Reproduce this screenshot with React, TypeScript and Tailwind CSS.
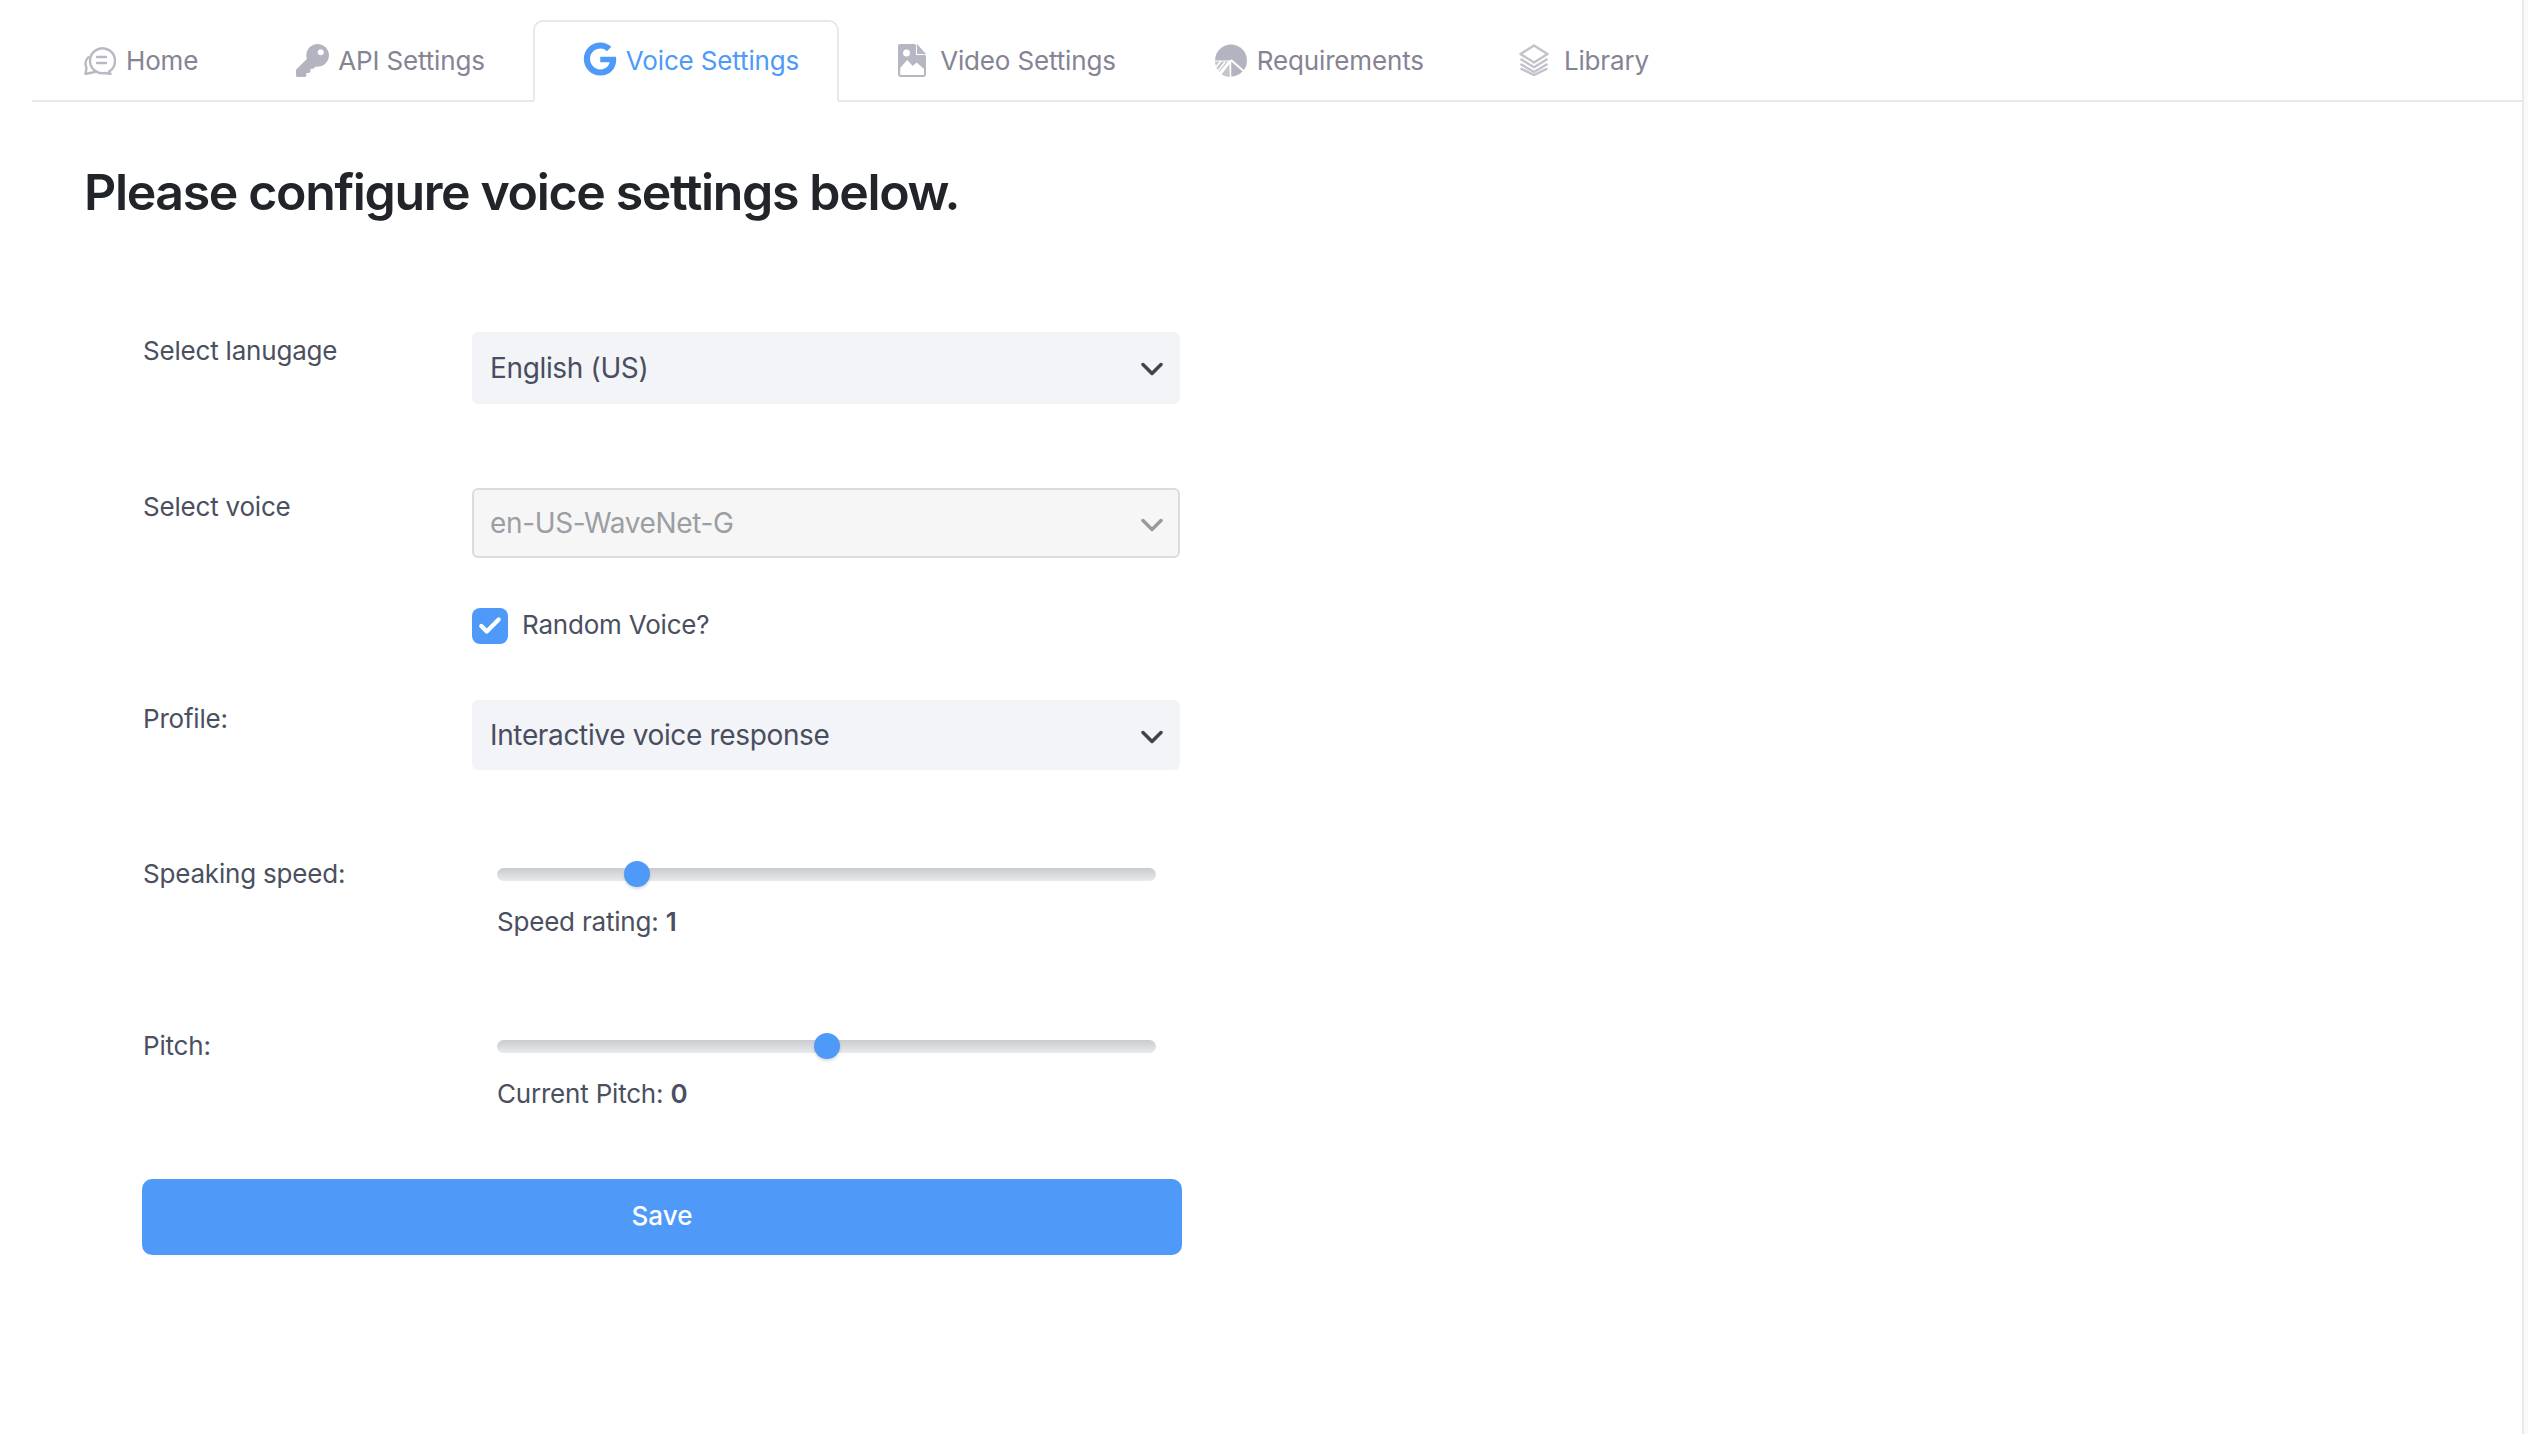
import { useState } from 'react';
import { FaGoogle, FaKey } from 'react-icons/fa';
import { Check } from 'lucide-react';

const HomeIcon = () => (
  <svg viewBox="0 0 32 30" className="h-[30px] w-[32px]" fill="none" stroke="#b9b9c5" strokeWidth="2.4" strokeLinejoin="round" strokeLinecap="round">
    <path d="M6 16a12.5 12.5 0 1 1 19 10.5l1.5 2.5-5.5-1a12.5 12.5 0 0 1-15-12z" />
    <path d="M4.5 12a10 10 0 0 0-2 11l-1 6 7-1.500 3-1" />
    <path d="M13 12h9M13 18h9" />
  </svg>
);

const VideoIcon = () => (
  <svg viewBox="0 0 28 33" className="h-[33px] w-[28px]">
    <path d="M2 0h15l11 12v18a3 3 0 0 1-3 3H3a3 3 0 0 1-3-3V2a2 2 0 0 1 2-2z" fill="#b7b7c3" />
    <path d="M2.200 30V24l7-8 5.500 6 4-3.500 7.300 6.500V30a1 1 0 0 1-1 1H3.200a1 1 0 0 1-1-1z" fill="#fff" />
    <circle cx="8.500" cy="9" r="3.500" fill="#fff" />
    <path d="M18 1.500l8.500 9.500H18z" fill="#fff" />
    <path d="M19 0l9 10h-9z" fill="#b7b7c3" />
  </svg>
);

const RequirementsIcon = () => (
  <svg viewBox="0 0 32 33" className="h-[33px] w-[32px]">
    <circle cx="16" cy="16.500" r="16" fill="#b4b4c0" />
    <path d="M0 16.500h15.500L14 33H0z" fill="#fff" />
    <path d="M0 17.500h13L4.500 28A16 16 0 0 1 0 17.500z" fill="#c5c5cf" />
    <path d="M14.500 20v13a16 16 0 0 1-8-2.500z" fill="#c5c5cf" />
    <path d="M16 16l16 14" stroke="#fff" strokeWidth="2" />
    <path d="M15.500 16v17" stroke="#fff" strokeWidth="1.500" />
    <path d="M1 23l5-6M3 27l7-9" stroke="#fff" strokeWidth="1.500" />
  </svg>
);

const LibraryIcon = () => (
  <svg viewBox="0 0 32 32" className="h-[32px] w-[32px]" fill="none" stroke="#c2c2cd" strokeWidth="2.400" strokeLinejoin="round">
    <path d="M16 1.500 29.500 10 16 18.500 2.500 10z" />
    <path d="M2.500 15 16 23.200 29.500 15" />
    <path d="M2.500 20 16 28 29.500 20" />
    <path d="M2.500 24.500 16 31 29.500 24.500" />
  </svg>
);

const tabs = [
  { name: 'Home', icon: <HomeIcon />, className: 'gap-[10px] pl-[50px] pr-[37px]' },
  { name: 'API Settings', icon: <FaKey className="h-[33px] w-[33px] text-[#b4b4c0]" />, className: 'gap-[9px] pl-[50px] pr-[39px]' },
  { name: 'Voice Settings', icon: <FaGoogle className="mt-[-3px] h-[34px] w-[34px] text-[#4f9af8]" />, active: true, className: 'gap-[9px] pl-[48px] pr-[38px]' },
  { name: 'Video Settings', icon: <VideoIcon />, className: 'gap-[14px] pl-[50px] pr-[38px]' },
  { name: 'Requirements', icon: <RequirementsIcon />, className: 'gap-[10px] pl-[50px] pr-[39px]' },
  { name: 'Library', icon: <LibraryIcon />, className: 'gap-[14px] pl-[44px] pr-[41px]' }
];

const FieldLabel = ({ text }: { text: string }) => (
  <label className="w-[330px] shrink-0 pl-[1px] text-[26px] leading-[38px] tracking-[-0.2px] text-[#4a5060]">{text}</label>
);

const SelectBox = ({ value, options, disabled, height }: { value: string; options: string[]; disabled?: boolean; height: string }) => (
  <div className="relative w-[708px]">
    <select
      defaultValue={value}
      disabled={disabled}
      className={`block w-full appearance-none rounded-[6px] pr-[50px] text-[28px] tracking-[-0.35px] outline-none ${height} ${
        disabled
          ? 'border-2 border-[#dcdcdc] bg-[#f6f6f6] pl-[16px] text-[#9b9ea3]'
          : 'bg-[#f3f4f8] pl-[18px] text-[#484e60]'
      }`}
    >
      {options.map((option) => (
        <option key={option}>{option}</option>
      ))}
    </select>
    <svg
      viewBox="0 0 22 14"
      className="pointer-events-none absolute right-[17px] top-[30px] h-[14px] w-[22px]"
      fill="none"
      stroke={disabled ? '#9a9a9a' : '#3e4350'}
      strokeWidth="3.500"
      strokeLinecap="round"
      strokeLinejoin="round"
    >
      <path d="M2 2.500l9 9 9-9" />
    </svg>
  </div>
);

const Slider = ({
  label,
  caption,
  min,
  max,
  step,
  value,
  onChange
}: {
  label: string;
  caption: string;
  min: number;
  max: number;
  step: number;
  value: number;
  onChange: (value: number) => void;
}) => (
  <div className="flex">
    <FieldLabel text={label} />
    <div className="ml-[25px] w-[659px]">
      <div className="flex h-[38px] items-center">
        <input
          type="range"
          min={min}
          max={max}
          step={step}
          value={value}
          onChange={(e) => onChange(Number(e.target.value))}
          className="h-[26px] w-full appearance-none bg-transparent [&::-webkit-slider-runnable-track]:h-[13px] [&::-webkit-slider-runnable-track]:rounded-full [&::-webkit-slider-runnable-track]:bg-gradient-to-b [&::-webkit-slider-runnable-track]:from-[#c9cccf] [&::-webkit-slider-runnable-track]:to-[#e8eaec] [&::-webkit-slider-thumb]:mt-[-6.5px] [&::-webkit-slider-thumb]:h-[26px] [&::-webkit-slider-thumb]:w-[26px] [&::-webkit-slider-thumb]:appearance-none [&::-webkit-slider-thumb]:rounded-full [&::-webkit-slider-thumb]:bg-[#4f9af8] [&::-webkit-slider-thumb]:shadow-[0_2px_3px_rgba(0,0,0,0.15)]"
        />
      </div>
      <p className="mt-[10px] text-[26px] leading-[38px] tracking-[-0.2px] text-[#4a5060]">
        {caption}: <strong className="font-semibold">{value}</strong>
      </p>
    </div>
  </div>
);

export default function App() {
  const [speed, setSpeed] = useState(1);
  const [pitch, setPitch] = useState(0);

  return (
    <div className="flex min-h-[1434px] bg-white font-['Inter',sans-serif]">
      <main className="flex-1 border-r-2 border-[#e9eaef]">
        {/* tabs */}
        <nav className="ml-[32px] flex h-[102px] items-end gap-[7px] border-b-2 border-[#e6e8ee] pt-[20px]">
          {tabs.map((tab) => (
            <a
              key={tab.name}
              href="#"
              className={`mb-[-2px] flex h-[82px] items-center rounded-t-[10px] border-2 pb-[2px] text-[26px] tracking-[-0.15px] ${tab.className} ${
                tab.active
                  ? 'border-[#e6e8ee] border-b-white text-[#4f9af8]'
                  : 'border-transparent text-[#848494]'
              }`}
            >
              {tab.icon}
              <span>{tab.name}</span>
            </a>
          ))}
        </nav>

        <h1 className="ml-[84px] mt-[60px] text-[50px] font-semibold leading-[60px] tracking-[-1.35px] text-[#212529]">
          Please configure voice settings below.
        </h1>

        <form className="ml-[142px] mt-[110px] w-[1040px]" onSubmit={(e) => e.preventDefault()}>
          <div className="flex">
            <FieldLabel text="Select lanugage" />
            <SelectBox height="h-[72px]" value="English (US)" options={['English (US)', 'English (UK)']} />
          </div>

          <div className="mt-[84px] flex">
            <FieldLabel text="Select voice" />
            <SelectBox height="h-[70px]" value="en-US-WaveNet-G" options={['en-US-WaveNet-G']} disabled />
          </div>

          <label className="ml-[330px] mt-[50px] flex items-center gap-[14px] text-[26px] leading-[36px] tracking-[-0.2px] text-[#4a5060]">
            <span className="flex h-[36px] w-[36px] items-center justify-center rounded-[8px] bg-[#4f9af8]">
              <Check size={26} strokeWidth={4} className="text-white" />
            </span>
            <span className="mt-[-2px]">Random Voice?</span>
          </label>

          <div className="mt-[56px] flex">
            <FieldLabel text="Profile:" />
            <SelectBox height="h-[70px]" value="Interactive voice response" options={['Interactive voice response', 'Telephony']} />
          </div>

          <div className="mt-[85px]">
            <Slider label="Speaking speed:" caption="Speed rating" min={0.25} max={4} step={0.25} value={speed} onChange={setSpeed} />
          </div>
          <div className="mt-[86px]">
            <Slider label="Pitch:" caption="Current Pitch" min={-20} max={20} step={1} value={pitch} onChange={setPitch} />
          </div>

          <button className="mt-[66px] h-[76px] w-full rounded-[10px] bg-[#4f9af8] pb-[4px] text-[26px] font-medium text-white">
            Save
          </button>
        </form>
      </main>
      <div className="w-[4px] bg-[#fafafa]" />
    </div>
  );
}
